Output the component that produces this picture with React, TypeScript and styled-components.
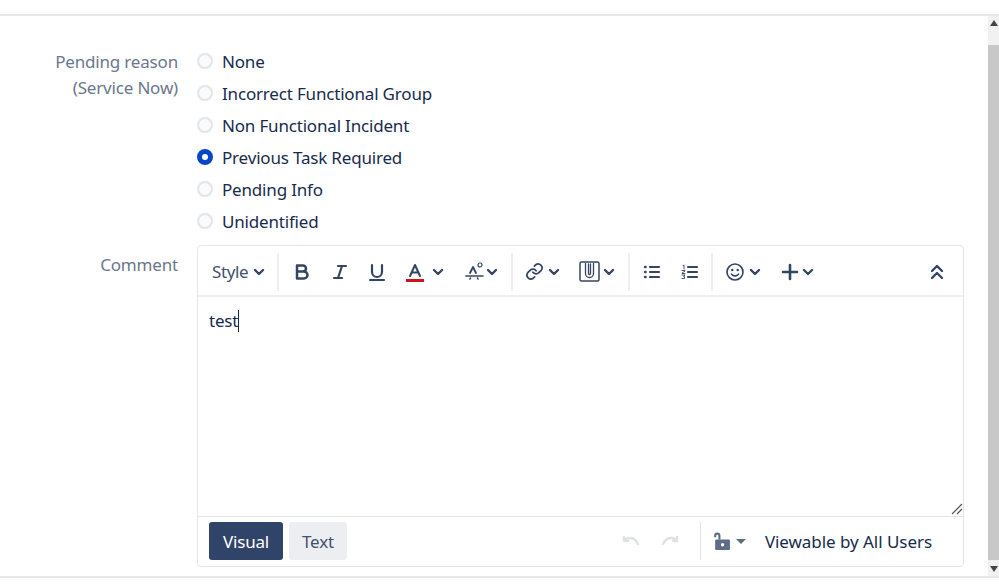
import React from "react";
import styled, { createGlobalStyle } from "styled-components";

const Global = createGlobalStyle`
  html, body { margin: 0; padding: 0; background: #fff; overflow: hidden; }
  body { font-family: "Noto Sans", "Open Sans", sans-serif; color: #172b4d; }
`;
const Page = styled.div`
  width: 999px; height: 585px; display: flex; flex-direction: column; overflow: hidden;
`;
const TopStrip = styled.div`
  height: 14px; flex: none; border-bottom: 2px solid #e6e7e9;
`;
const Middle = styled.div`
  height: 560px; flex: none; display: flex;
`;
const Content = styled.main`
  width: 988px; flex: none; padding-top: 30px; box-sizing: border-box; display: flex; flex-direction: column;
`;
const BottomStrip = styled.div`
  flex: 1; border-top: 2px solid #e6e7e9;
`;
const Scrollbar = styled.div`
  flex: 1; background: #f1f1f1; display: flex; flex-direction: column; justify-content: space-between;
`;
const Thumb = styled.div`
  height: 515px; background: #c8c8c8; margin-top: 13px;
`;
const ArrowBox = styled.div`
  height: 14px; display: flex; align-items: center; justify-content: center;
`;
const FormRow = styled.div`
  display: grid; grid-template-columns: 178px 766px; column-gap: 19px;
`;
const Label = styled.label<{ $top: number }>`
  text-align: right; color: #6b778c; font-size: 17px; line-height: 26px; padding-top: ${(p) => p.$top}px; letter-spacing: -0.18px;
`;
const RadioList = styled.div`
  display: flex; flex-direction: column; margin-bottom: 7px;
`;
const RadioRow = styled.div`
  height: 32px; box-sizing: border-box; padding-bottom: 2px; display: flex; align-items: center; gap: 9px; font-size: 17px; color: #172b4d; letter-spacing: -0.18px;
`;
const RadioDot = styled.span<{ $on?: boolean }>`
  width: 16px; height: 16px; border-radius: 50%; flex: none; box-sizing: border-box; display: flex; align-items: center; justify-content: center;
  background: ${(p) => (p.$on ? "#0747c6" : "#fafbfc")};
  border: 2px solid ${(p) => (p.$on ? "#0747c6" : "#e2e4e8")};
  &::after { content: ""; width: 6px; height: 6px; border-radius: 50%; background: ${(p) => (p.$on ? "#fff" : "transparent")}; }
`;
const Editor = styled.div`
  width: 767px; height: 322px; box-sizing: border-box; border: 1px solid #e4e5e8; border-radius: 4px; display: flex; flex-direction: column;
`;
const Toolbar = styled.div`
  height: 47px; flex: none; border-bottom: 2px solid #eeeff1; display: flex; align-items: center; color: #344563; padding-top: 2px;
`;
const Group = styled.div<{ $w: number; $last?: boolean }>`
  width: ${(p) => p.$w}px; height: 38px; flex: none; display: flex; align-items: center; box-sizing: border-box; position: relative;
  border-right: ${(p) => (p.$last ? "0" : "2px solid #eeeff1")};
`;
const Tool = styled.span<{ $x: number }>`
  position: absolute; left: ${(p) => p.$x}px; top: 0; height: 38px; display: flex; align-items: center;
`;
const StyleText = styled.span`
  font-size: 17px; color: #42526e; letter-spacing: -0.4px;
`;
const Spacer = styled.div`
  flex: 1;
`;
const Body = styled.div`
  flex: 1; position: relative; padding: 11px 11px 10px; font-size: 17px; line-height: 26px; color: #172b4d; letter-spacing: -0.18px;
`;
const Caret = styled.span`
  display: inline-block; width: 1px; height: 22px; background: #172b4d; vertical-align: -5px;
`;
const Grip = styled.svg`
  position: absolute; right: 0; bottom: 1px;
`;
const Footer = styled.div`
  height: 50px; box-sizing: border-box; flex: none; border-top: 1px solid #e4e5e8; display: flex; align-items: center; padding: 0 11px 1px 11px;
`;
const ModeButton = styled.button<{ $active?: boolean }>`
  height: 38px; border: 0; border-radius: 3px; padding: 0; font-family: inherit; font-size: 17px; letter-spacing: -0.18px;
  width: ${(p) => (p.$active ? 74 : 58)}px; margin-right: 6px;
  background: ${(p) => (p.$active ? "#2f4468" : "#eceef1")};
  color: ${(p) => (p.$active ? "#fff" : "#42526e")};
`;
const UndoGroup = styled.div`
  display: flex; align-items: center; gap: 21px; margin-right: 21px;
`;
const Divider = styled.div`
  width: 1px; height: 38px; background: #e4e5e8; margin-right: 12px;
`;
const Security = styled.div`
  display: flex; align-items: center; gap: 6px; margin-right: 19px;
`;
const Viewable = styled.span`
  font-size: 17px; color: #172b4d; letter-spacing: -0.05px; margin-right: 20px;
`;

const Chev = () => (
  <svg width="12" height="8" viewBox="0 0 12 8" fill="none" stroke="#344563" strokeWidth="2.4" strokeLinecap="round" strokeLinejoin="round">
    <path d="M2 2l4 4 4-4" />
  </svg>
);
const Ic = ({ w = 20, h = 20, vb = "0 0 20 20", children }: { w?: number; h?: number; vb?: string; children: React.ReactNode }) => (
  <svg width={w} height={h} viewBox={vb} fill="none" stroke="#344563" strokeWidth="2" strokeLinecap="round" strokeLinejoin="round">{children}</svg>
);

const options = ["None", "Incorrect Functional Group", "Non Functional Incident", "Previous Task Required", "Pending Info", "Unidentified"];

export default function App() {
  return (
    <Page>
      <Global />
      <TopStrip />
      <Middle>
        <Content>
          <FormRow>
            <Label $top={3}>Pending reason<br />(Service Now)</Label>
            <RadioList>
              {options.map((o) => (
                <RadioRow key={o}>
                  <RadioDot $on={o === "Previous Task Required"} />
                  {o}
                </RadioRow>
              ))}
            </RadioList>
          </FormRow>
          <FormRow>
            <Label $top={7}>Comment</Label>
            <Editor>
              <Toolbar>
                <Group $w={81}>
                  <Tool $x={14}><StyleText>Style</StyleText></Tool>
                  <Tool $x={55}><Chev /></Tool>
                </Group>
                <Group $w={234}>
                  <Tool $x={13}>
                    <Ic><path d="M5 3.5h6a3 3 0 0 1 0 6H5zM5 9.5h7a3.5 3.5 0 0 1 0 7H5zM5 3.5v13" strokeWidth="2.5" /></Ic>
                  </Tool>
                  <Tool $x={51}>
                    <Ic><path d="M8 4h8M4 16h8M12 4l-4 12" strokeWidth="2.2" /></Ic>
                  </Tool>
                  <Tool $x={88}>
                    <Ic><path d="M5 3v7a5 5 0 0 0 10 0V3M3 18h14" strokeWidth="2.2" /></Ic>
                  </Tool>
                  <Tool $x={126}>
                    <svg width="20" height="20" viewBox="0 0 20 20" fill="none" strokeLinecap="round" strokeLinejoin="round">
                      <path d="M5 14l5-11 5 11M6.8 10.5h6.4" stroke="#344563" strokeWidth="2" />
                      <rect x="1" y="17" width="18" height="3" fill="#d0121c" />
                    </svg>
                  </Tool>
                  <Tool $x={153}><Chev /></Tool>
                  <Tool $x={185}>
                    <Ic w={22} h={22} vb="0 0 22 22"><path d="M6 12l3-6 3 6" strokeWidth="1.8" /><circle cx="16" cy="4" r="2" strokeWidth="1.2" /><path d="M2 15h17" strokeWidth="1.6" /><path d="M6 18l.5-1M14 18l-.5-1" strokeWidth="1.6" /></Ic>
                  </Tool>
                  <Tool $x={207}><Chev /></Tool>
                </Group>
                <Group $w={117}>
                  <Tool $x={12}>
                    <svg width="19" height="19" viewBox="0 0 24 24" fill="none" stroke="#344563" strokeWidth="2.2" strokeLinecap="round" strokeLinejoin="round">
                      <path d="M10 13a5 5 0 0 0 7.5.5l3-3a5 5 0 0 0-7-7l-1.7 1.7" />
                      <path d="M14 11a5 5 0 0 0-7.5-.5l-3 3a5 5 0 0 0 7 7l1.7-1.7" />
                    </svg>
                  </Tool>
                  <Tool $x={35}><Chev /></Tool>
                  <Tool $x={66}>
                    <svg width="21" height="21" viewBox="0 0 21 21" fill="none" stroke="#344563" strokeLinecap="round">
                      <rect x="1" y="1" width="19" height="19" rx="1.5" strokeWidth="1.5" />
                      <path d="M6.5 2.5v10a4 4 0 0 0 8 0v-10M9.5 3v9.500a1 1 0 0 0 2 0V3" strokeWidth="1.3" />
                    </svg>
                  </Tool>
                  <Tool $x={90}><Chev /></Tool>
                </Group>
                <Group $w={83}>
                  <Tool $x={13}>
                    <svg width="18" height="16" viewBox="0 0 18 16" fill="none" stroke="#344563" strokeLinecap="round">
                      <path d="M7 3h9M7 8h9M7 13h9" strokeWidth="2.2" />
                      <path d="M2 3h.6M2 8h.6M2 13h.6" strokeWidth="2.4" />
                    </svg>
                  </Tool>
                  <Tool $x={51}>
                    <svg width="18" height="16" viewBox="0 0 18 16" fill="none" stroke="#344563" strokeLinecap="round">
                      <path d="M7 3h9M7 8h9M7 13h9" strokeWidth="2.2" />
                      <path d="M2 1.500l1-.5v4M1 6.500h3v.6l-3 2v.4h3M1 11h3l-1.500 1.500h1v2H1" strokeWidth="0.9" />
                    </svg>
                  </Tool>
                </Group>
                <Group $w={125} $last>
                  <Tool $x={12}>
                    <svg width="20" height="20" viewBox="0 0 20 20" fill="none" stroke="#344563" strokeLinecap="round">
                      <circle cx="10" cy="10" r="8" strokeWidth="1.6" />
                      <circle cx="7.3" cy="8" r="0.6" strokeWidth="1.2" />
                      <circle cx="12.7" cy="8" r="0.6" strokeWidth="1.2" />
                      <path d="M6.500 12.200c2 2.200 5 2.200 7 0" strokeWidth="1.6" />
                    </svg>
                  </Tool>
                  <Tool $x={36}><Chev /></Tool>
                  <Tool $x={67}>
                    <Ic><path d="M10 3v14M3 10h14" strokeWidth="2.6" /></Ic>
                  </Tool>
                  <Tool $x={89}><Chev /></Tool>
                </Group>
                <Spacer />
                <svg width="14" height="16" viewBox="0 0 14 16" fill="none" stroke="#344563" strokeWidth="2.4" strokeLinecap="round" strokeLinejoin="round" style={{ marginRight: 19 }}>
                  <path d="M2 7l5-5 5 5M2 14l5-5 5 5" />
                </svg>
              </Toolbar>
              <Body>
                test<Caret />
                <Grip width="12" height="12" viewBox="0 0 12 12" stroke="#555" strokeWidth="1.2">
                  <path d="M1 11L11 1M6 11l5-5" />
                </Grip>
              </Body>
              <Footer>
                <ModeButton $active>Visual</ModeButton>
                <ModeButton>Text</ModeButton>
                <Spacer />
                <UndoGroup>
                  <svg width="18" height="12" viewBox="0 0 18 12" fill="none" stroke="#dfe1e5" strokeWidth="2.4" strokeLinecap="round" strokeLinejoin="round"><path d="M2 2v4h4M2 6c3-4 10-5 14 3" /></svg>
                  <svg width="18" height="12" viewBox="0 0 18 12" fill="none" stroke="#dfe1e5" strokeWidth="2.4" strokeLinecap="round" strokeLinejoin="round"><path d="M16 2v4h-4M16 6C13 2 6 1 2 9" /></svg>
                </UndoGroup>
                <Divider />
                <Security>
                  <svg width="17" height="20" viewBox="0 0 16 19" fill="#5e6c84"><path d="M1 4.500a3 3 0 0 1 6 0V8H5V4.500a1 1 0 0 0-2 0V6H1z" /><path fillRule="evenodd" d="M3 8h12a1 1 0 0 1 1 1v8a1 1 0 0 1-1 1H3a1 1 0 0 1-1-1V9a1 1 0 0 1 1-1zm6 3.500a1.600 1.600 0 1 0 0 3.200 1.600 1.600 0 0 0 0-3.200z" /></svg>
                  <svg width="10" height="5" viewBox="0 0 10 5" fill="#5e6c84"><path d="M0 0h10L5 5z" /></svg>
                </Security>
                <Viewable>Viewable by All Users</Viewable>
              </Footer>
            </Editor>
          </FormRow>
        </Content>
        <Scrollbar>
          <ArrowBox>
            <svg width="8" height="6" viewBox="0 0 8 6" fill="#444"><path d="M4 0l4 6H0z" /></svg>
          </ArrowBox>
          <Thumb />
          <ArrowBox>
            <svg width="8" height="6" viewBox="0 0 8 6" fill="#444"><path d="M4 6L0 0h8z" /></svg>
          </ArrowBox>
        </Scrollbar>
      </Middle>
      <BottomStrip />
    </Page>
  );
}
